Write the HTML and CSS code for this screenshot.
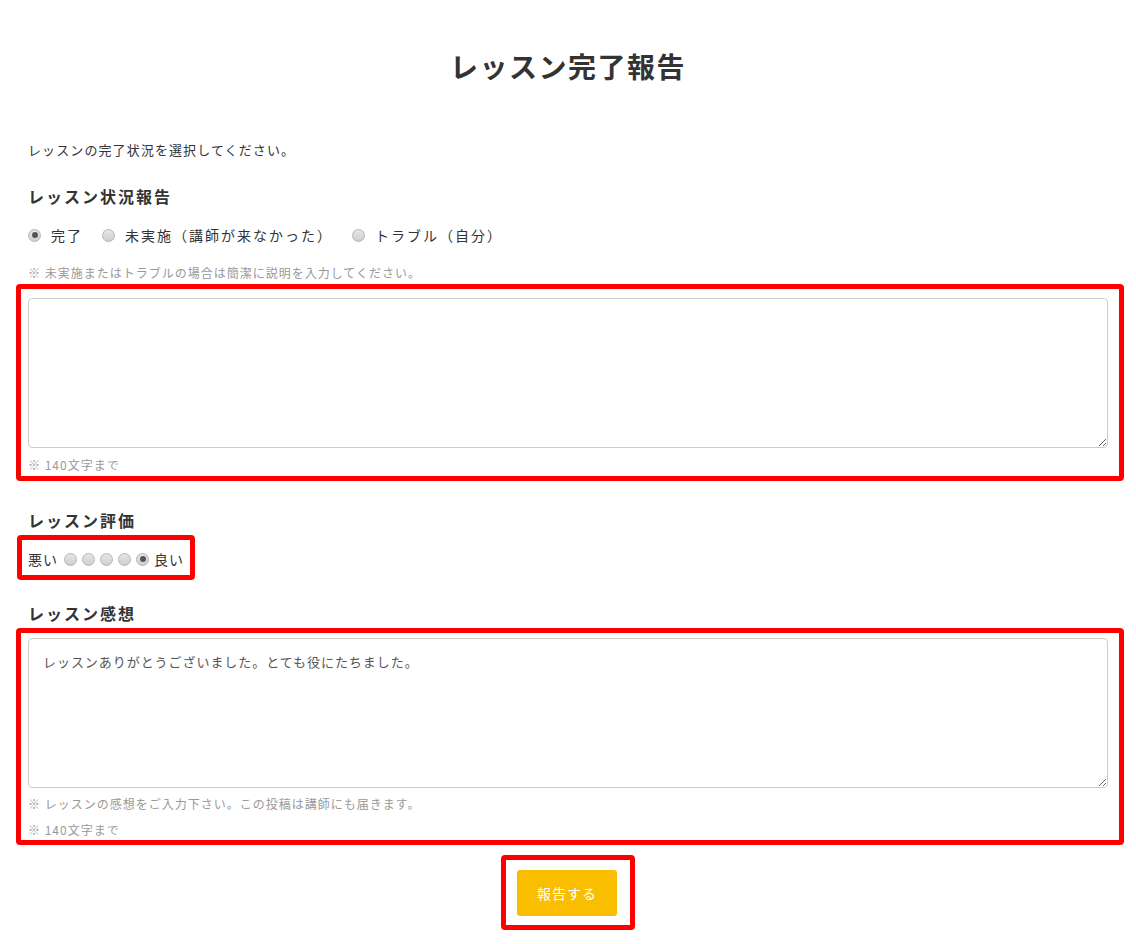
FILE: index.html
```html
<!DOCTYPE html>
<html lang="ja">
<head>
    <meta charset="UTF-8">
    <meta name="viewport" content="width=device-width, initial-scale=1.0">
    <title>レッスン完了報告</title>
    <link rel="stylesheet" href="styles.css">
</head>
<body>
    <div class="report">
        <h1 class="report-title">レッスン完了報告</h1>

        <p class="intro">レッスンの完了状況を選択してください。</p>

        <h2 class="section-title">レッスン状況報告</h2>
        <div class="status-options">
            <label class="option"><input type="radio" name="status" checked> 完了</label>
            <label class="option"><input type="radio" name="status"> 未実施（講師が来なかった）</label>
            <label class="option"><input type="radio" name="status"> トラブル（自分）</label>
        </div>
        <p class="note note-top">※ 未実施またはトラブルの場合は簡潔に説明を入力してください。</p>

        <!-- 説明入力 -->
        <div class="mark mark-status">
            <textarea class="field"></textarea>
            <p class="note note-limit">※ 140文字まで</p>
        </div>

        <h2 class="section-title title-rating">レッスン評価</h2>
        <div class="mark mark-rating">
            <span class="rating-label">悪い</span>
            <input type="radio" name="rating">
            <input type="radio" name="rating">
            <input type="radio" name="rating">
            <input type="radio" name="rating">
            <input type="radio" name="rating" checked>
            <span class="rating-label">良い</span>
        </div>

        <h2 class="section-title title-comment">レッスン感想</h2>
        <div class="mark mark-comment">
            <textarea class="field">レッスンありがとうございました。とても役にたちました。</textarea>
            <p class="note note-comment">※ レッスンの感想をご入力下さい。この投稿は講師にも届きます。</p>
            <p class="note note-limit2">※ 140文字まで</p>
        </div>

        <div class="submit-row">
            <div class="mark mark-submit">
                <button class="submit-btn" type="button">報告する</button>
            </div>
        </div>
    </div>
</body>
</html>
```

FILE: styles.css
```css
body {
    margin: 0;
    padding: 0;
    background-color: #ffffff;
    color: #333333;
    font-family: "Noto Sans CJK JP", "Noto Sans", sans-serif;
}
.report {
    width: 1080px;
    margin: 0 auto;
}
.report-title {
    margin: 46px 0 0;
    font-size: 28px;
    line-height: 40px;
    font-weight: bold;
    letter-spacing: 1.5px;
    text-align: center;
    color: #333;
}
.intro {
    margin: 54px 0 0;
    font-size: 13px;
    line-height: 20px;
    letter-spacing: 1.1px;
}
.section-title {
    margin: 24px 0 0;
    font-size: 16px;
    line-height: 24px;
    font-weight: bold;
    letter-spacing: 2px;
}
.title-rating {
    margin-top: 27px;
}
.title-comment {
    margin-top: 21px;
}
.status-options {
    display: flex;
    align-items: center;
    margin-top: 15px;
    font-size: 14px;
    line-height: 24px;
    letter-spacing: 2px;
}
.option {
    display: flex;
    align-items: center;
    margin-right: 19px;
}
input[type="radio"] {
    -webkit-appearance: none;
    appearance: none;
    width: 13px;
    height: 13px;
    margin: 0;
    border: 1px solid #b5b5b5;
    border-radius: 50%;
    background: linear-gradient(#e6e6e6, #cfcfcf);
    position: relative;
    flex-shrink: 0;
}
.option input[type="radio"] {
    margin-right: 10px;
}
input[type="radio"]:checked::after {
    content: "";
    position: absolute;
    top: 2.5px;
    left: 2.5px;
    width: 6px;
    height: 6px;
    border-radius: 50%;
    background-color: #555;
}
.note {
    margin: 0;
    font-size: 12px;
    line-height: 18px;
    color: #999999;
    letter-spacing: 1px;
}
.note-top {
    margin-top: 17px;
}
/* 赤枠 */
.mark {
    border: 5px solid #ff0000;
    border-radius: 4px;
}
.mark-status {
    margin: 2px -16px 0 -12px;
    padding: 9px 11px 2px 7px;
}
.mark-comment {
    margin: 3px -16px 0 -12px;
    padding: 5px 11px 1px 7px;
}
.field {
    display: block;
    box-sizing: border-box;
    width: 100%;
    height: 150px;
    margin: 0;
    padding: 13px 14px;
    border: 1px solid #cccccc;
    border-radius: 4px;
    font-family: inherit;
    font-size: 13px;
    line-height: 20px;
    color: #555;
    letter-spacing: 0.95px;
}
.note-limit {
    margin-top: 8px;
}
.note-comment {
    margin-top: 7px;
}
.note-limit2 {
    margin-top: 8px;
}
.mark-rating {
    display: inline-flex;
    align-items: center;
    gap: 5px;
    margin: 3px 0 0 -11px;
    padding: 9px 6px 6px 6px;
    font-size: 14px;
    line-height: 20px;
}
.rating-label {
    letter-spacing: 1px;
}
.rating-label:first-child {
    margin-right: 1px;
}
.submit-row {
    display: flex;
    justify-content: center;
    margin-top: 10px;
    padding-bottom: 14px;
}
.mark-submit {
    padding: 10px 13px 9px 11px;
}
.submit-btn {
    display: block;
    width: 100px;
    height: 46px;
    border: none;
    border-radius: 3px;
    background-color: #f9be00;
    color: #ffffff;
    font-family: inherit;
    font-size: 14px;
    letter-spacing: 1px;
}
```
